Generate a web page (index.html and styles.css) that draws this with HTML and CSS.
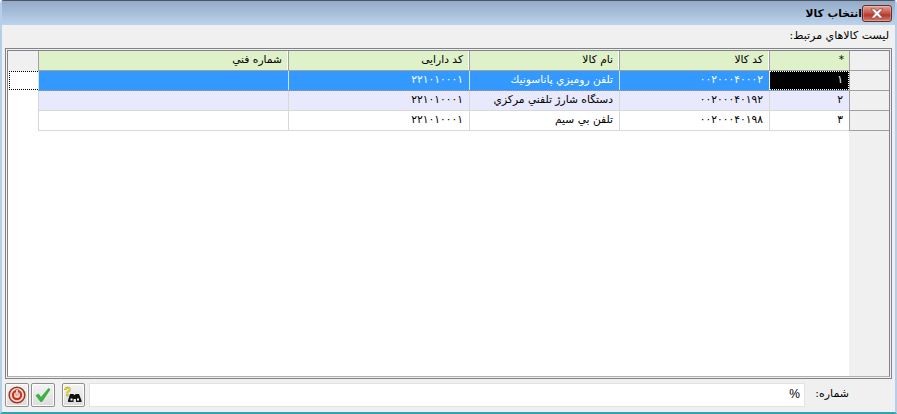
FILE: index.html
```html
<!DOCTYPE html>
<html lang="fa">
<head>
<meta charset="utf-8">
<title>انتخاب کالا</title>
<link rel="stylesheet" href="styles.css">
</head>
<body>
<div class="window">
  <header class="titlebar">
    <span class="title">انتخاب کالا</span>
    <button class="close" aria-label="close">
      <svg width="16" height="11" viewBox="0 0 16 11"><path d="M2 1h3.500L8 3.400 10.500 1H14l-4 4.500 4 4.500h-3.500L8 7.600 5.500 10H2l4-4.500z" fill="#fff" stroke="#7d3d37" stroke-width=".7"/></svg>
    </button>
  </header>
  <main class="body">
    <div class="label">ليست كالاهاي مرتبط:</div>
    <div class="grid">
      <div class="grid-inner">
        <div class="indicator">
          <div class="ind-head"></div>
          <div class="ind-focus"></div>
        </div>
        <div class="table">
          <div class="row head">
            <div class="cell c-tech">شماره فني</div>
            <div class="cell c-asset">کد دارایی</div>
            <div class="cell c-name">نام کالا</div>
            <div class="cell c-code">کد کالا</div>
            <div class="cell c-idx">*</div>
          </div>
          <div class="row selected">
            <div class="cell c-tech"></div>
            <div class="cell c-asset">۲۲۱۰۱۰۰۰۱</div>
            <div class="cell c-name">تلفن رومیزي پاناسونیك</div>
            <div class="cell c-code">۰۰۲۰۰۰۴۰۰۰۲</div>
            <div class="cell c-idx current">۱</div>
          </div>
          <div class="row alt">
            <div class="cell c-tech"></div>
            <div class="cell c-asset">۲۲۱۰۱۰۰۰۱</div>
            <div class="cell c-name">دستگاه شارژ تلفني مركزي</div>
            <div class="cell c-code">۰۰۲۰۰۰۴۰۱۹۲</div>
            <div class="cell c-idx">۲</div>
          </div>
          <div class="row">
            <div class="cell c-tech"></div>
            <div class="cell c-asset">۲۲۱۰۱۰۰۰۱</div>
            <div class="cell c-name">تلفن بي سيم</div>
            <div class="cell c-code">۰۰۲۰۰۰۴۰۱۹۸</div>
            <div class="cell c-idx">۳</div>
          </div>
        </div>
        <div class="gutter">
          <div class="gutter-cell"></div>
          <div class="gutter-cell"></div>
          <div class="gutter-cell"></div>
          <div class="gutter-cell"></div>
        </div>
      </div>
    </div>
    <footer class="footer">
      <button class="tool">
        <svg width="18" height="18" viewBox="0 0 18 18"><circle cx="9" cy="9" r="7.800" fill="#f6dcd2" stroke="#a2331f" stroke-width="1.600"/><circle cx="9" cy="9" r="4.100" fill="#f6dcd2" stroke="#c8321c" stroke-width="2.200"/><rect x="8" y="3.500" width="2" height="5.500" fill="#fff" stroke="#a2331f" stroke-width=".5"/></svg>
      </button>
      <button class="tool">
        <svg width="18" height="16" viewBox="0 0 18 16"><path d="M2 8.500l2.500-1.500 2.500 3.500L14.500 1.500 16 2.500 8 14.500H6.500z" fill="#3cb53c" stroke="#1f9a30" stroke-width=".6"/></svg>
      </button>
      <button class="tool tool-find">
        <svg width="19" height="18" viewBox="0 0 19 18"><text x="0" y="10" class="q">?</text><path d="M6 8h3.500l.5 1h1l.5-1H15l2.500 6.500V16H12v-3H9.500v3H4v-1.500z" fill="#111"/><rect x="6.500" y="12.500" width="2" height="2" fill="#fff"/><rect x="13" y="12.500" width="2" height="2" fill="#fff"/></svg>
      </button>
      <div class="input">%</div>
      <span class="num-label">شماره:</span>
    </footer>
  </main>
</div>
</body>
</html>
```
FILE: styles.css
```css
html, body { margin: 0; padding: 0; }
body { width: 897px; height: 414px; overflow: hidden; font-family: "DejaVu Sans", sans-serif; font-size: 10.7px; color: #000; }
button { margin: 0; padding: 0; font: inherit; }
.window { width: 897px; height: 414px; box-sizing: border-box; display: flex; flex-direction: column; background: #f0f0f0; border-top: 1px solid #4a5560; border-left: 2px solid #b5cfe9; border-right: 2px solid #b5cfe9; border-bottom: 2px solid #2fa3b5; border-radius: 4px 4px 0 0; }
.titlebar { height: 24px; flex: none; display: flex; justify-content: flex-end; align-items: flex-start; gap: 0; padding: 4px 3px 0 0; box-sizing: border-box; background: linear-gradient(#93abc9, #bcd3ec); }
.title { font-weight: bold; font-size: 10.7px; line-height: 17px; direction: rtl; }
.close { width: 30px; height: 17px; border: 1px solid #6d2a24; border-radius: 3px; background: linear-gradient(#dfa598, #c8574a 45%, #b3382b 60%, #cf8073); box-shadow: inset 0 0 0 1px rgba(255,255,255,.25); display: flex; align-items: center; justify-content: center; }
.body { flex: 1; min-height: 0; display: flex; flex-direction: column; padding: 0 3px; }
.label { height: 23px; line-height: 22px; text-align: right; direction: rtl; flex: none; padding-right: 3px; font-size: 11px; }
.grid { height: 331px; flex: none; box-sizing: border-box; display: flex; border: 1px solid #80848a; padding: 1px; background: #f0f0f0; }
.grid-inner { flex: 1; display: flex; border: 1px solid #80848a; border-bottom-color: #b0b0b0; background: #fff; min-width: 0; }
.indicator { width: 30px; flex: none; }
.ind-head { height: 20px; background: #f0f0f0; }
.ind-focus { box-sizing: border-box; height: 19px; margin-left: 1px; border: 1px dotted #000; border-right: 0; }
.table { width: 811px; flex: none; }
.row { display: flex; height: 20px; box-sizing: border-box; border-bottom: 1px solid #d8d8d8; background: #fff; }
.cell { box-sizing: border-box; border-left: 1px solid #d8d8d8; text-align: right; padding-right: 6px; line-height: 18px; direction: rtl; }
.c-tech { width: 250px; }
.c-asset { width: 181px; }
.c-name { width: 150px; }
.c-code { width: 150px; }
.c-idx { width: 80px; }
.head { background: #dff1c9; border-bottom: 1px solid #a0a0a0; }
.head .cell { border-left: 1px solid #a0a0a0; border-right: 1px solid #fff; padding-right: 5px; }
.head .c-idx { border-right: 0; }
.selected { background: #3399ff; color: #fff; border-bottom: 1px dotted #b89a80; }
.selected .cell { border-left: 1px solid #d0e4f8; }
.alt { background: #e9e9fd; }
.current { background: #000; outline: 1px dotted #fff; outline-offset: -1px; }
.gutter { flex: 1; background: #f0f0f0; }
.gutter-cell { height: 20px; box-sizing: border-box; border-left: 1px solid #a0a0a0; border-bottom: 1px solid #a0a0a0; }
.footer { flex: 1; display: flex; align-items: flex-start; gap: 2px; padding-top: 4px; }
.num-label { width: 87px; flex: none; box-sizing: border-box; text-align: right; direction: rtl; padding-right: 43px; line-height: 22px; font-size: 11px; white-space: nowrap; margin-left: -2px; }
.input { width: 716px; height: 24px; box-sizing: border-box; flex: none; background: #fff; border: 1px solid #e3e3e3; text-align: right; line-height: 21px; padding-right: 4px; font-family: "Liberation Sans", sans-serif; font-size: 12px; margin-left: 2px; }
.tool { width: 24px; height: 24px; flex: none; border: 1px solid #8f8f8f; border-radius: 2px; background: linear-gradient(#f4f4f4, #dcdcdc); box-shadow: inset 0 0 0 1px #fff; display: flex; align-items: center; justify-content: center; }
.tool-find { margin-left: 5px; width: 23px; }
.q { font: bold 12px "Liberation Sans", sans-serif; fill: #f5e51a; stroke: #8a7f00; stroke-width: .3; }
```
